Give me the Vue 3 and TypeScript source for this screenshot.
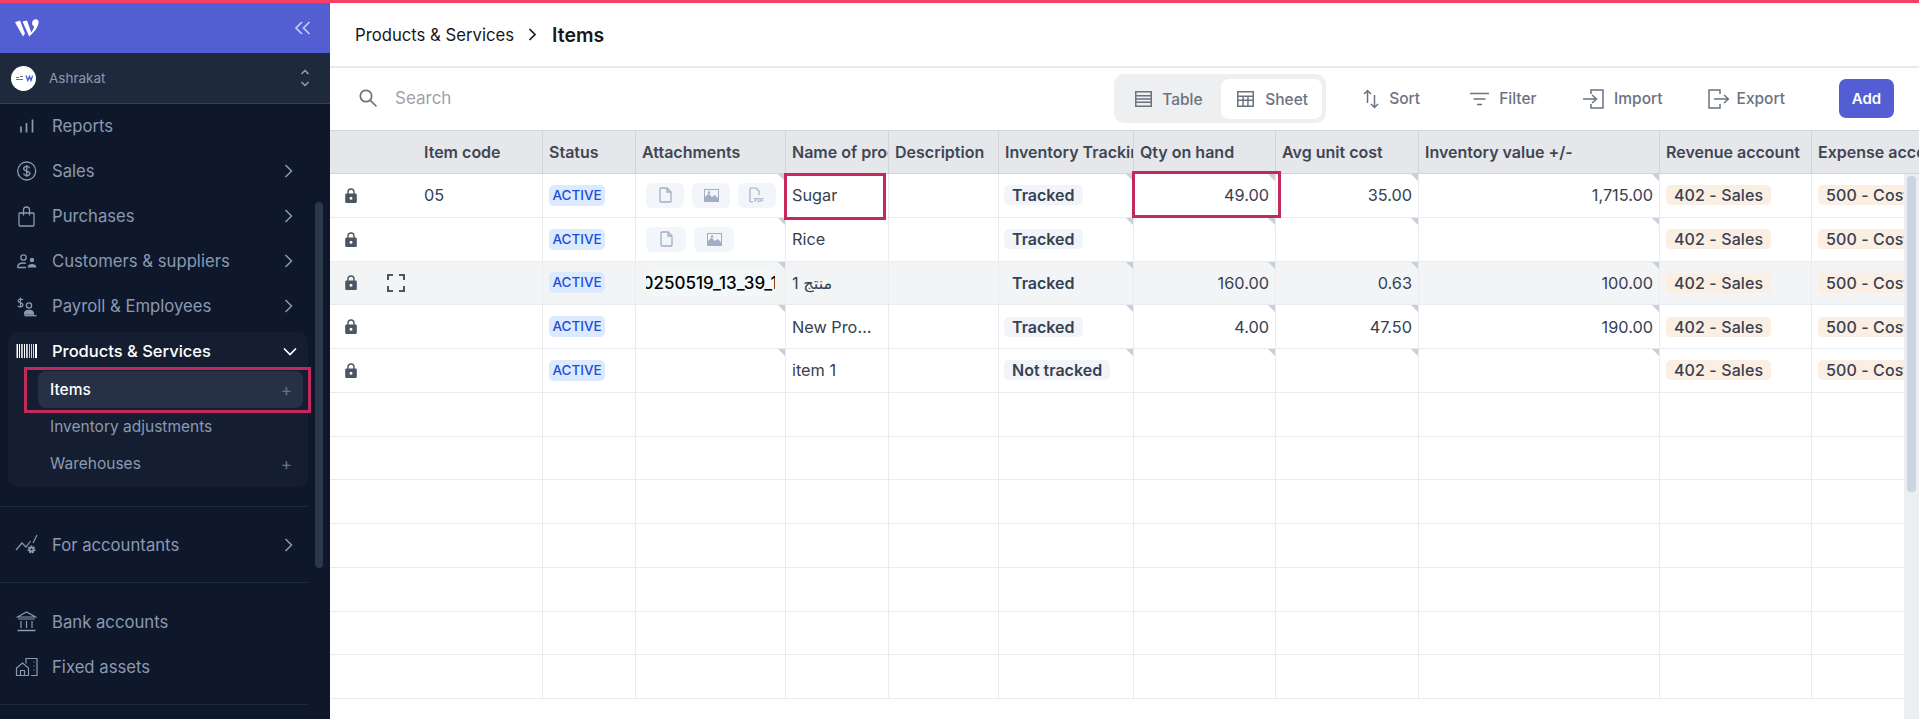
<script setup lang="ts">
interface NavItem {
  label: string
  icon: string
  arrow?: boolean
}

interface Row {
  code: string
  files: string
  name: string
  tracking: string
  qty: string
  cost: string
  value: string
  hover?: boolean
}

const mainNav: NavItem[] = [
  { label: 'Reports', icon: 'reports' },
  { label: 'Sales', icon: 'sales', arrow: true },
  { label: 'Purchases', icon: 'bag', arrow: true },
  { label: 'Customers & suppliers', icon: 'people', arrow: true },
  { label: 'Payroll & Employees', icon: 'payroll', arrow: true }
]

const assetNav: NavItem[] = [
  { label: 'Bank accounts', icon: 'bank' },
  { label: 'Fixed assets', icon: 'assets' }
]

const headers = [
  '',
  'Status',
  'Attachments',
  'Name of product',
  'Description',
  'Inventory Tracking',
  'Qty on hand',
  'Avg unit cost',
  'Inventory value +/-',
  'Revenue account',
  'Expense account'
]

const rows: Row[] = [
  { code: '05', files: 'three', name: 'Sugar', tracking: 'Tracked', qty: '49.00', cost: '35.00', value: '1,715.00' },
  { code: '', files: 'two', name: 'Rice', tracking: 'Tracked', qty: '', cost: '', value: '' },
  { code: '', files: 'name', name: 'منتج 1', tracking: 'Tracked', qty: '160.00', cost: '0.63', value: '100.00', hover: true },
  { code: '', files: '', name: 'New Product 1', tracking: 'Tracked', qty: '4.00', cost: '47.50', value: '190.00' },
  { code: '', files: '', name: 'item 1', tracking: 'Not tracked', qty: '', cost: '', value: '' }
]

const emptyRows = 7
</script>

<template>
  <div class="app">
    <div class="top-line"></div>
    <div class="shell">
      <aside class="sidebar">
        <div class="brand">
          <svg class="logo" width="24" height="18" viewBox="0 0 24 18" fill="#fff">
            <path d="M0 3.200 L5 1.600 L10 14.500 L8 17.500 Z" />
            <path d="M7.500 2.600 L12 1.400 L16.500 14 L14.200 17.500 Z" />
            <path d="M18.500 1 C21 -0.400 24 0.500 23.600 3.600 C23.200 8 19 14.500 13.500 17.600 C16.500 13.500 18.400 10.600 19.300 7.600 C17.200 7.400 16 3 18.500 1 Z" />
          </svg>
          <svg width="17" height="14" viewBox="0 0 17 14" fill="none" stroke="#c7cdf3" stroke-width="1.700">
            <path d="M8 1 L2 7 L8 13" />
            <path d="M15.500 1 L9.500 7 L15.500 13" />
          </svg>
        </div>

        <div class="org">
          <span class="avatar">
            <svg width="18" height="8" viewBox="0 0 18 8">
              <path d="M1 3.500h3M5 2.500h3M1 5.500h7" stroke="#667085" stroke-width="1" />
              <path d="M11 1.500 L12.800 6.500 L14.400 2.500 L16 6.500 L17.600 1.500" fill="none" stroke="#4f5bd5" stroke-width="1.300" />
            </svg>
          </span>
          <span class="org-name">Ashrakat</span>
          <svg class="updown" width="10" height="18" viewBox="0 0 10 18" fill="none" stroke="#94a3b8" stroke-width="1.500">
            <path d="M1.500 5 L5 1.500 L8.500 5" />
            <path d="M1.500 13 L5 16.500 L8.500 13" />
          </svg>
        </div>

        <nav class="nav">
          <a v-for="item in mainNav" :key="item.label" class="nav-item">
            <svg class="nav-icon" width="24" height="24" viewBox="0 0 24 24" fill="none" stroke="currentColor" stroke-width="1.300">
              <template v-if="item.icon === 'reports'">
                <path d="M6 18.500v-6M11.500 18.500V9M17.500 18.500v-13" stroke-width="1.700" />
              </template>
              <template v-else-if="item.icon === 'sales'">
                <circle cx="11.700" cy="12" r="9" />
                <path d="M14.700 9.200c-.5-1.200-1.600-1.800-3-1.800-1.700 0-3 .9-3 2.300 0 3.200 6.200 1.500 6.200 4.600 0 1.400-1.400 2.300-3.200 2.300-1.500 0-2.700-.7-3.200-2M11.700 6v12" />
              </template>
              <template v-else-if="item.icon === 'bag'">
                <path d="M4.800 9h13.400a.8.800 0 0 1 .8.800v11.200a1 1 0 0 1-1 1H5a1 1 0 0 1-1-1V9.800a.8.800 0 0 1 .8-.8Z" />
                <path d="M8.500 11.500V6a3 3 0 0 1 6 0v5.500" />
              </template>
              <template v-else-if="item.icon === 'people'">
                <circle cx="8.500" cy="8.500" r="2.700" />
                <path d="M2.500 18.500c0-3 2.500-4.500 6-4.500 1 0 1.800.1 2.500.4M2.500 18.500h8.500" />
                <circle cx="17" cy="11" r="2.200" fill="currentColor" stroke="none" />
                <path d="M12.500 18.500c.3-2.500 2-3.500 4.500-3.500s4.200 1 4.500 3.500Z" fill="currentColor" stroke="none" />
              </template>
              <template v-else-if="item.icon === 'payroll'">
                <path d="M8 6c-.8-1.300-4.800-1.500-5 .8-.2 2.700 5 1.500 5 4.200 0 2.300-4 2.200-5.200.8M5.500 3.500v10" stroke-width="1.200" />
                <circle cx="14" cy="11.500" r="2.600" />
                <path d="M9.500 20c0-2.500 2-3.700 4.500-3.700s4.500 1.200 4.500 3.700Z" fill="currentColor" />
                <path d="M9.500 21.700h12" />
              </template>
            </svg>
            <span>{{ item.label }}</span>
            <svg v-if="item.arrow" class="chevron" width="9" height="14" viewBox="0 0 9 14" fill="none" stroke="currentColor" stroke-width="1.500">
              <path d="M1.500 1 L7.500 7 L1.500 13" />
            </svg>
          </a>

          <div class="group">
            <div class="group-head">
              <svg class="nav-icon" width="24" height="24" viewBox="0 0 24 24" fill="#fff">
                <path d="M1.500 5h1.500v14H1.500zM4 5h1v14H4zM6.200 5h1.500v14H6.200zM9 5h1v14H9zM11.200 5h1.500v14h-1.500zM14 5h.8v14H14zM16 5h.8v14H16zM18 5h.8v14H18zM20 5h2v14h-2z" />
              </svg>
              <span>Products &amp; Services</span>
              <svg class="chevron down" width="14" height="9" viewBox="0 0 14 9" fill="none" stroke="#fff" stroke-width="1.700">
                <path d="M1 1.500 L7 7.500 L13 1.500" />
              </svg>
            </div>
            <div class="sub active">
              <span>Items</span><span class="plus">+</span>
            </div>
            <div class="sub"><span>Inventory adjustments</span></div>
            <div class="sub"><span>Warehouses</span><span class="plus">+</span></div>
          </div>

          <div class="divider first"></div>

          <a class="nav-item">
            <svg class="nav-icon" width="24" height="24" viewBox="0 0 24 24" fill="none" stroke="currentColor" stroke-width="1.200">
              <path d="M1 17 L7 10 L11 14 L15.500 8 M18 10 L22 2" />
              <circle cx="16.500" cy="16.500" r="3" fill="currentColor" stroke-width="2" stroke-dasharray="1.500 1.100" />
              <circle cx="16.500" cy="16.500" r="1.100" fill="#0f172a" stroke="none" />
            </svg>
            <span>For accountants</span>
            <svg class="chevron" width="9" height="14" viewBox="0 0 9 14" fill="none" stroke="currentColor" stroke-width="1.500">
              <path d="M1.500 1 L7.500 7 L1.500 13" />
            </svg>
          </a>

          <div class="divider"></div>

          <div class="assets">
            <a v-for="item in assetNav" :key="item.label" class="nav-item">
              <svg class="nav-icon" width="24" height="24" viewBox="0 0 24 24" fill="none" stroke="currentColor" stroke-width="1.200">
                <template v-if="item.icon === 'bank'">
                  <path d="M2.500 7 L11.500 2 L20.500 7 Z M3 9h17M6 11v7M11.500 11v7M17 11v7" />
                  <path d="M2.500 20.500h18" stroke-width="1.500" />
                </template>
                <template v-else>
                  <path d="M1.500 20.500v-7.500l6-5 6 5v7.500ZM5.500 20.500v-5h4v5" />
                  <path d="M11 8.500V3.500h11v17h-6" />
                  <path d="M18.500 7h1M18.500 11h1M18.500 15h1" />
                </template>
              </svg>
              <span>{{ item.label }}</span>
            </a>
          </div>
          <div class="divider"></div>
        </nav>

        <div class="side-thumb"></div>
        <div class="mark mark-nav"></div>
      </aside>

      <main class="main">
        <header class="crumbs">
          <span>Products &amp; Services</span>
          <svg width="9" height="13" viewBox="0 0 9 13" fill="none" stroke="#18181b" stroke-width="1.700">
            <path d="M1.500 1 L7 6.500 L1.500 12" />
          </svg>
          <strong>Items</strong>
        </header>

        <div class="toolbar">
          <svg class="search-icon" width="20" height="20" viewBox="0 0 20 20" fill="none" stroke="#71717a" stroke-width="1.700">
            <circle cx="7" cy="7" r="5.700" />
            <path d="M11.300 11.300 L17.500 17.500" />
          </svg>
          <span class="search">Search</span>

          <div class="switch">
            <span class="switch-btn">
              <svg width="17" height="16" viewBox="0 0 17 16" fill="#6b7280">
                <path d="M0 0h17v16H0Zm1.500 1.500v2.500h14V1.500Zm0 4V7.200h14V5.500Zm0 3.200v1.800h14V8.700Zm0 3.300v2.500h14V12Z" fill-rule="evenodd" />
              </svg>
              Table
            </span>
            <span class="switch-btn on">
              <svg width="17" height="16" viewBox="0 0 17 16" fill="#6b7280">
                <path d="M0 0h17v16H0Zm1.500 1.500v3h14v-3Zm0 4.500v2.400h3.800V6Zm5.300 0v2.400h3.400V6Zm4.900 0v2.400h3.800V6ZM1.500 9.900v4.600h3.800V9.900Zm5.300 0v4.600h3.400V9.900Zm4.900 0v4.600h3.800V9.900Z" fill-rule="evenodd" />
              </svg>
              Sheet
            </span>
          </div>

          <span class="tool sort">
            <svg width="16" height="20" viewBox="0 0 16 20" fill="none" stroke="#6b7280" stroke-width="1.500">
              <path d="M1 5 L4.500 1.500 L8 5 M4.500 2v12" />
              <path d="M8 15 L11.500 18.500 L15 15 M11.500 6v12" />
            </svg>
            Sort
          </span>
          <span class="tool filter">
            <svg width="19" height="14" viewBox="0 0 19 14" fill="none" stroke="#6b7280" stroke-width="1.600">
              <path d="M0 1.500h19M3.500 7h12M7 12.500h5" />
            </svg>
            Filter
          </span>
          <span class="tool import">
            <svg width="21" height="20" viewBox="0 0 21 20" fill="none" stroke="#6b7280" stroke-width="1.500">
              <path d="M8 5V1h12v18H8v-4" />
              <path d="M0 10h13M9 6l4.500 4L9 14" />
            </svg>
            Import
          </span>
          <span class="tool export">
            <svg width="21" height="20" viewBox="0 0 21 20" fill="none" stroke="#6b7280" stroke-width="1.500">
              <path d="M12 5V1H1v18h11v-4" />
              <path d="M6 10h14M16 6l4.500 4L16 14" />
            </svg>
            Export
          </span>
          <button class="add">Add</button>
        </div>

        <section class="table">
          <div class="row head">
            <div v-for="(h, i) in headers" :key="i" class="cell">
              <span v-if="i === 0" class="code-head">Item code</span>
              <span v-else class="head-text">{{ h }}</span>
            </div>
          </div>

          <div class="body">
            <div class="rows">
              <div v-for="(r, i) in rows" :key="i" class="row" :class="{ hover: r.hover }">
                <div class="cell first">
                  <svg class="lock" width="12" height="15" viewBox="0 0 12 15" fill="#4b5563">
                    <path d="M1.500 5.500h.8V4a3.700 3.700 0 0 1 7.400 0v1.500h.8a1.300 1.300 0 0 1 1.300 1.300v6.900a1.300 1.300 0 0 1-1.300 1.300h-9A1.300 1.300 0 0 1 .2 13.700V6.800a1.300 1.300 0 0 1 1.300-1.300Zm2.200 0h4.600V4a2.300 2.300 0 0 0-4.600 0ZM6 8.700a1.500 1.500 0 1 0 0 3 1.500 1.500 0 0 0 0-3Z" fill-rule="evenodd" />
                  </svg>
                  <svg v-if="r.hover" class="expand" width="18" height="18" viewBox="0 0 18 18" fill="none" stroke="#4b5563" stroke-width="2">
                    <path d="M1 6V1h5M12 1h5v5M17 12v5h-5M6 17H1v-5" />
                  </svg>
                  <span class="code">{{ r.code }}</span>
                </div>
                <div class="cell"><span class="active-pill">ACTIVE</span></div>
                <div class="cell files tri">
                  <template v-if="r.files === 'name'">
                    <span class="file-name"><span>20250519_13_39_10</span></span>
                  </template>
                  <template v-else-if="r.files">
                    <span class="file" :class="{ wide: r.files === 'two' }">
                      <svg width="13" height="16" viewBox="0 0 13 16" fill="none" stroke="#a3aec2" stroke-width="1.300">
                        <path d="M1 2a1 1 0 0 1 1-1h6l4 4v9a1 1 0 0 1-1 1H2a1 1 0 0 1-1-1ZM8 1v4h4" />
                      </svg>
                    </span>
                    <span class="file" :class="{ wide: r.files === 'two' }">
                      <svg width="15" height="13" viewBox="0 0 15 13" fill="#a3aec2">
                        <path d="M0 0h15v13H0Zm1 1v7l3.500-3.500L8 8l2.500-2L14 9V1Z" fill-rule="evenodd" />
                        <circle cx="5" cy="3.500" r="1.300" />
                      </svg>
                    </span>
                    <span v-if="r.files === 'three'" class="file">
                      <svg width="16" height="16" viewBox="0 0 16 16" fill="none" stroke="#a3aec2" stroke-width="1.200">
                        <path d="M1 14V2a1 1 0 0 1 1-1h5l3 3v4M1 14a1 1 0 0 0 1 1h2" />
                        <text x="5" y="15" font-size="5" font-weight="700" fill="#a3aec2" stroke="none">PDF</text>
                      </svg>
                    </span>
                  </template>
                </div>
                <div class="cell name"><span class="clip">{{ r.name }}</span></div>
                <div class="cell"></div>
                <div class="cell tri"><span class="track-pill">{{ r.tracking }}</span></div>
                <div class="cell num tri">{{ r.qty }}</div>
                <div class="cell num tri">{{ r.cost }}</div>
                <div class="cell num tri">{{ r.value }}</div>
                <div class="cell"><span class="acc-pill">402 - Sales</span></div>
                <div class="cell"><span class="acc-pill">500 - Cost of sales</span></div>
              </div>

              <div v-for="n in emptyRows" :key="'e' + n" class="row">
                <div v-for="c in headers.length" :key="c" class="cell"></div>
              </div>
            </div>
            <div class="track"><div class="thumb"></div></div>
          </div>

          <div class="mark mark-name"></div>
          <div class="mark mark-qty"></div>
        </section>
      </main>
    </div>
  </div>
</template>

<style>
html,
body {
  margin: 0;
  background: #fff;
}
</style>

<style scoped>
* {
  box-sizing: border-box;
}

.app {
  width: 1919px;
  height: 719px;
  overflow: hidden;
  display: flex;
  flex-direction: column;
  font-family: Inter, "Noto Sans", "DejaVu Sans", sans-serif;
  font-size: 16.300px;
  color: #374151;
}

.top-line {
  height: 3px;
  flex: none;
  background: #f83f66;
}

.shell {
  flex: 1;
  display: flex;
  min-height: 0;
}

/* sidebar */
.sidebar {
  width: 330px;
  flex: none;
  position: relative;
  background: #0f172a;
  color: #8a9ab3;
  overflow: hidden;
}

.brand {
  height: 50px;
  background: #525ed1;
  display: flex;
  align-items: center;
  justify-content: space-between;
  padding: 0 19px 0 15px;
}

.org {
  height: 51px;
  background: #1e293b;
  border-bottom: 1px solid #334155;
  display: flex;
  align-items: center;
  padding: 0 20px 0 11px;
}

.avatar {
  width: 25px;
  height: 25px;
  border-radius: 50%;
  background: #fff;
  display: flex;
  align-items: center;
  justify-content: center;
}

.org-name {
  margin-left: 13px;
  flex: 1;
  font-size: 13.500px;
  padding-bottom: 1px;
}

.nav {
  margin-top: -1px;
}

.nav-item {
  height: 45px;
  display: flex;
  align-items: center;
  padding: 0 37px 0 15px;
  font-size: 16.700px;
}

.nav-icon {
  flex: none;
  margin-right: 13px;
}

.nav-item span,
.group-head span {
  flex: 1;
}

.group {
  margin: 4px 22px 0 8px;
  padding-bottom: 5px;
  background: #141e30;
  border-radius: 10px;
}

.group-head {
  height: 39px;
  display: flex;
  align-items: center;
  padding: 0 11px 1px 7px;
  color: #fff;
  font-size: 16.500px;
  font-weight: 500;
}

.sub {
  height: 37px;
  margin-left: 30px;
  margin-right: 5px;
  padding: 0 11px 0 12px;
  display: flex;
  align-items: center;
  justify-content: space-between;
  font-size: 15.500px;
  border-radius: 8px;
}

.sub.active {
  background: #263145;
  color: #fff;
  font-weight: 500;
}

.plus {
  color: #64748b;
  font-size: 17px;
  font-weight: 400;
}

.divider {
  height: 1px;
  width: 308px;
  margin: 15px 0;
  background: #1e293b;
}

.divider.first {
  margin: 19px 0 15px;
}

.assets {
  padding-top: 1px;
}

.side-thumb {
  position: absolute;
  left: 315px;
  top: 199px;
  width: 8px;
  height: 366px;
  border-radius: 4px;
  background: #2b384c;
}

/* annotation boxes */
.mark {
  position: absolute;
  border: 3px solid #c4295c;
  pointer-events: none;
}

.mark-nav {
  left: 24px;
  top: 364px;
  width: 287px;
  height: 46px;
}

.mark-name {
  left: 454px;
  top: 43px;
  width: 102px;
  height: 47px;
}

.mark-qty {
  left: 802px;
  top: 41px;
  width: 149px;
  height: 47px;
}

/* main */
.main {
  flex: 1;
  min-width: 0;
  display: flex;
  flex-direction: column;
}

.crumbs {
  height: 65px;
  flex: none;
  border-bottom: 2px solid #e9eaee;
  display: flex;
  align-items: center;
  padding: 0 0 0 25px;
  font-size: 16.700px;
  color: #18181b;
}

.crumbs svg {
  margin: 0 15px 0 14px;
}

.crumbs strong {
  font-size: 19.500px;
  font-weight: 600;
}

.toolbar {
  height: 62px;
  flex: none;
  display: flex;
  align-items: center;
  padding: 0 25px 1px 29px;
  color: #6b7280;
  font-size: 15.500px;
  font-weight: 500;
}

.search {
  flex: 1;
  margin-left: 16px;
  padding-bottom: 1px;
  color: #a1a1aa;
  font-size: 17px;
  font-weight: 400;
}

.switch {
  display: flex;
  height: 49px;
  padding: 5px 4px 4px 5px;
  background: #eeeff1;
  border-radius: 10px;
  margin-right: 37px;
}

.switch-btn {
  display: flex;
  align-items: center;
  gap: 10px;
  padding: 0 0 0 16px;
  border-radius: 8px;
  width: 102px;
}

.switch-btn.on {
  background: #fff;
  width: 101px;
  gap: 11px;
}

.tool {
  display: flex;
  align-items: center;
  gap: 10px;
  margin-right: 47px;
}

.tool.sort {
  margin-right: 50px;
}

.tool.filter {
  margin-right: 46.500px;
}

.tool.import {
  margin-right: 45px;
}

.tool.export {
  gap: 8px;
  margin-right: 49px;
}

.add {
  width: 55px;
  height: 39px;
  border: none;
  border-radius: 7px;
  background: #525ed1;
  color: #fff;
  font: 600 15px Inter, sans-serif;
  padding: 0;
  margin-left: 5px;
}

/* table */
.table {
  position: relative;
  flex: 1;
  min-height: 0;
  overflow: hidden;
  display: flex;
  flex-direction: column;
}

.row {
  display: grid;
  grid-template-columns: 212px 93px 150px 103px 110px 135px 142px 143px 241px 152px 250px;
  width: 1589px;
  height: 43.750px;
  border-bottom: 1px solid #e9ebee;
}

.row.hover {
  background: #f3f4f6;
}

.head {
  height: 44px;
  flex: none;
  background: #e5e7eb;
  border-top: 1px solid #d1d5db;
  border-bottom: 1px solid #d1d5db;
  font-weight: 600;
  font-size: 16px;
  color: #3f4654;
}

.cell {
  position: relative;
  min-width: 0;
  display: flex;
  align-items: center;
  padding: 0 6px 0 6px;
  border-left: 1px solid #e9ebee;
  overflow: hidden;
  white-space: nowrap;
}

.cell:first-child {
  border-left: none;
  padding: 0 0 0 15px;
}

.cell.name {
  padding-right: 14px;
}

.head .cell {
  border-left-color: #d1d5db;
  padding-right: 0;
}

.code-head {
  margin-left: 79px;
}

.head-text {
  overflow: hidden;
}

.body {
  flex: 1;
  min-height: 0;
  display: flex;
}

.rows {
  width: 1574px;
  overflow: hidden;
}

.track {
  width: 15px;
  flex: none;
  background: #eceef1;
  padding: 2px 3px;
}

.thumb {
  height: 316px;
  border-radius: 4px;
  background: #cbd5e1;
}

.lock {
  flex: none;
}

.expand {
  position: absolute;
  left: 57px;
  top: 12px;
}

.code {
  margin-left: 67px;
}

.tri::after {
  content: "";
  position: absolute;
  top: 0;
  right: 0;
  border-style: solid;
  border-width: 0 7px 7px 0;
  border-color: transparent #c7cfdd transparent transparent;
}

.active-pill {
  height: 21px;
  padding: 0 0 1px;
  width: 56px;
  display: flex;
  align-items: center;
  justify-content: center;
  border-radius: 5px;
  background: #dbeafe;
  color: #1d4ed8;
  font-size: 13.500px;
  font-weight: 500;
}

.files {
  gap: 8px;
  padding-left: 10px;
}

.file {
  flex: none;
  width: 38px;
  height: 25px;
  display: flex;
  align-items: center;
  justify-content: center;
  background: #f2f6fa;
  border-radius: 6px;
}

.file.wide {
  width: 40px;
}

.file-name {
  width: 129px;
  height: 26px;
  display: flex;
  align-items: center;
  overflow: hidden;
  background: #f2f8fa;
  border-radius: 6px;
  color: #000;
  font-size: 17px;
  font-weight: 500;
}

.file-name span {
  margin-left: -14px;
}

.clip {
  overflow: hidden;
  text-overflow: ellipsis;
}

.track-pill,
.acc-pill {
  height: 20px;
  padding: 0 8px;
  display: flex;
  align-items: center;
  border-radius: 5px;
  font-size: 16px;
  font-weight: 600;
  background: #f1f5f9;
}

.track-pill {
  margin-left: -1px;
}

.acc-pill {
  font-weight: 500;
  letter-spacing: .1px;
  background: #fbeee3;
  flex: none;
}

.num {
  justify-content: flex-end;
}
</style>
